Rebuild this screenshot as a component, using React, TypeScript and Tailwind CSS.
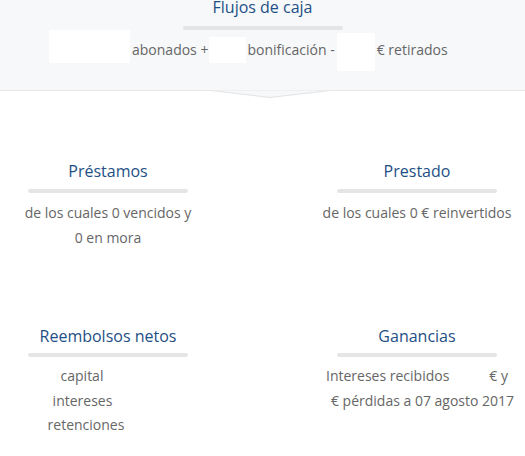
import React from "react";

const font = { fontFamily: '"Open Sans", "Noto Sans", sans-serif' };

function Bar() {
  return <div className="mx-auto h-[4px] w-[160px] rounded-full bg-[#e5e5e5]" />;
}

export default function App() {
  return (
    <div className="relative h-[456px] w-[525px] overflow-hidden bg-white" style={font}>
      <div className="relative flex h-[91px] flex-col border-b border-[#e6e6e6] bg-[#f7f8fa]">
        <div className="mt-[-5px] text-center text-[16px] leading-[24px] text-[#1e4f85]">Flujos de caja</div>
        <div className="mt-[7px]">
          <Bar />
        </div>
        <div className="flex items-start pl-[49px] text-[14px] leading-[20px] text-[#666666]">
          <div className="h-[33px] w-[81px] bg-white" />
          <span className="ml-[2px] mt-[10px]">abonados +</span>
          <div className="ml-[1px] mt-[7px] h-[26px] w-[37px] bg-white" />
          <span className="ml-[1px] mt-[10px]">bonificación -</span>
          <div className="ml-[2px] mt-[3px] h-[38px] w-[38px] bg-white" />
          <span className="ml-[2px] mt-[10px]">€ retirados</span>
        </div>
        <svg
          className="absolute left-[207px] top-[89px]"
          width="128"
          height="10"
          viewBox="0 0 128 10"
        >
          <polygon points="0,1 63,8.5 127,1" fill="#f7f8fa" stroke="#e3e3e3" strokeWidth="1" />
          <rect x="0" y="0" width="128" height="1.2" fill="#f7f8fa" />
        </svg>
      </div>

      <div className="flex justify-between pt-[68px] text-[14px] leading-[25px] text-[#666666]">
        <div className="w-[216px] text-center">
          <div className="text-[16px] leading-[24px] text-[#1e4f85]">Préstamos</div>
          <div className="mt-[6px]">
            <Bar />
          </div>
          <div className="mt-[7px]">
            <div>de los cuales 0 vencidos y</div>
            <div>0 en mora</div>
          </div>
        </div>
        <div className="w-[216px] text-center">
          <div className="text-[16px] leading-[24px] text-[#1e4f85]">Prestado</div>
          <div className="mt-[6px]">
            <Bar />
          </div>
          <div className="mt-[7px]">
            <div>de los cuales 0 € reinvertidos</div>
          </div>
        </div>
      </div>

      <div className="mt-[74px] flex justify-between text-[14px] leading-[24.5px] text-[#666666]">
        <div className="w-[216px] text-center">
          <div className="text-[16px] leading-[24px] text-[#1e4f85]">Reembolsos netos</div>
          <div className="mt-[5px]">
            <Bar />
          </div>
          <div className="mt-[7px]">
            <div>
              capital<span className="inline-block w-[52px]" />
            </div>
            <div>
              intereses<span className="inline-block w-[51px]" />
            </div>
            <div>
              retenciones<span className="inline-block w-[44px]" />
            </div>
          </div>
        </div>
        <div className="w-[216px] text-center">
          <div className="text-[16px] leading-[24px] text-[#1e4f85]">Ganancias</div>
          <div className="mt-[5px]">
            <Bar />
          </div>
          <div className="mt-[7px]">
            <div>
              Intereses recibidos<span className="inline-block w-[40px]" />€ y
            </div>
            <div className="pl-[11px]">€ pérdidas a 07 agosto 2017</div>
          </div>
        </div>
      </div>
    </div>
  );
}
